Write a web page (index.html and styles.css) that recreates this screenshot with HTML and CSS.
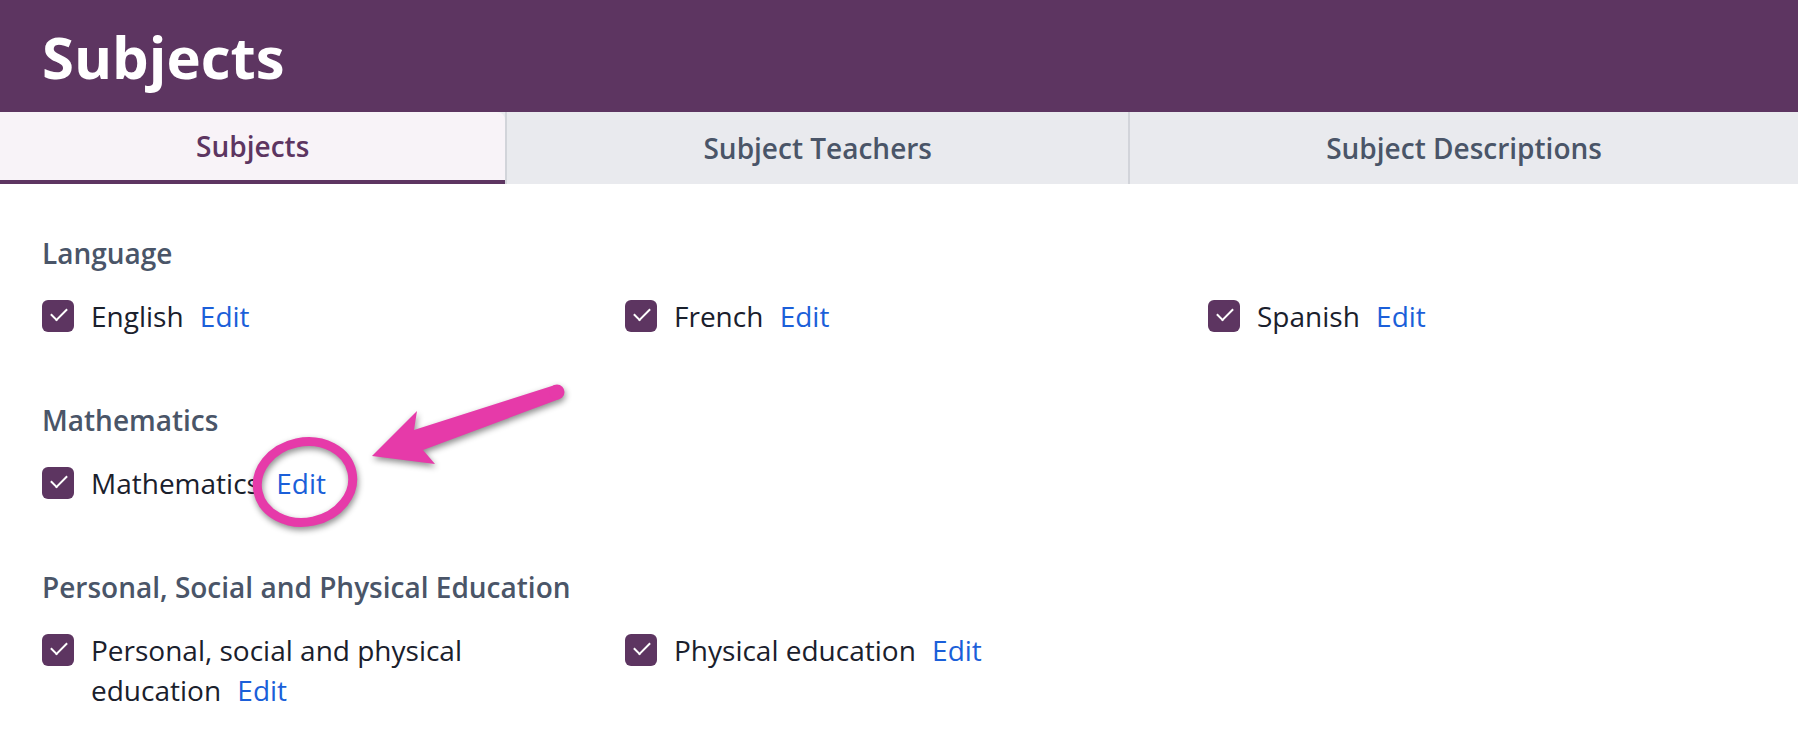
FILE: index.html
```html
<!DOCTYPE html>
<html lang="en">
<head>
<meta charset="UTF-8">
<title>Subjects</title>
<link rel="stylesheet" href="styles.css">
</head>
<body>
<header class="page-header">
  <h1>Subjects</h1>
</header>

<nav class="tabs">
  <a class="tab active" href="#">Subjects</a>
  <a class="tab" href="#">Subject Teachers</a>
  <a class="tab" href="#">Subject Descriptions</a>
</nav>

<main class="content">
  <section class="group">
    <h2>Language</h2>
    <div class="items">
      <div class="item"><span class="check"></span><span class="label">English <a href="#" class="edit">Edit</a></span></div>
      <div class="item"><span class="check"></span><span class="label">French <a href="#" class="edit">Edit</a></span></div>
      <div class="item"><span class="check"></span><span class="label">Spanish <a href="#" class="edit">Edit</a></span></div>
    </div>
  </section>

  <section class="group">
    <h2>Mathematics</h2>
    <div class="items">
      <div class="item"><span class="check"></span><span class="label">Mathematics <a href="#" class="edit">Edit</a></span></div>
    </div>
  </section>

  <section class="group">
    <h2>Personal, Social and Physical Education</h2>
    <div class="items">
      <div class="item"><span class="check"></span><span class="label">Personal, social and physical education <a href="#" class="edit">Edit</a></span></div>
      <div class="item"><span class="check"></span><span class="label">Physical education <a href="#" class="edit">Edit</a></span></div>
    </div>
  </section>
</main>

<!-- annotation drawn over the screenshot -->
<svg class="markup" width="1798" height="744" viewBox="0 0 1798 744">
  <ellipse cx="305" cy="482" rx="48" ry="40" transform="rotate(-12 305 482)" fill="none" stroke="#e63aa9" stroke-width="9"/>
  <polygon points="372,456 417,411 414,430 555,385 559.5,399 423,450 435,464" fill="#e63aa9"/>
  <circle cx="557" cy="392" r="7.5" fill="#e63aa9"/>
</svg>
</body>
</html>
```

FILE: styles.css
```css
body {
  margin: 0;
  font-family: "Open Sans", "Noto Sans", sans-serif;
  color: #1a202c;
  background: #fff;
  position: relative;
  height: 744px;
  overflow: hidden;
}

.page-header {
  background: #5d3561;
  height: 112px;
  padding: 0 42px;
  display: flex;
  align-items: center;
}

.page-header h1 {
  margin: 0;
  color: #fff;
  font-size: 58px;
  font-weight: 700;
}

.tabs {
  display: flex;
  background: #e9eaee;
}

.tab {
  flex: 1 1 auto;
  height: 72px;
  display: flex;
  align-items: center;
  justify-content: center;
  font-size: 28px;
  font-weight: 600;
  color: #4a5568;
  text-decoration: none;
  border-left: 2px solid #d2d4da;
  box-sizing: border-box;
}

.tab:first-child {
  border-left: none;
}

.tab.active {
  background: #f8f3f8;
  color: #5d3561;
  border-bottom: 4px solid #5d3561;
  border-top-right-radius: 8px;
}

.content {
  padding: 49px 42px 0;
  line-height: 40px;
  font-size: 28px;
}

.group {
  margin-bottom: 64px;
}

.group h2 {
  margin: 0 0 23px;
  font-size: 28px;
  font-weight: 600;
  color: #4a5568;
}

.items {
  display: grid;
  grid-template-columns: repeat(3, 503px);
  column-gap: 80px;
}

.item {
  display: flex;
  align-items: flex-start;
}

.check {
  flex: none;
  width: 32px;
  height: 32px;
  margin: 4px 17px 0 0;
  border-radius: 6px;
  background: #5d3561;
  position: relative;
}

/* the tick */
.check::after {
  content: "";
  position: absolute;
  left: 9px;
  top: 8px;
  width: 14px;
  height: 7px;
  border-left: 2px solid #fff;
  border-bottom: 2px solid #fff;
  transform: rotate(-45deg);
}

.edit {
  color: #1b5fd9;
  text-decoration: none;
  margin-left: 9px;
}

.markup {
  position: absolute;
  left: 0;
  top: 0;
  pointer-events: none;
  filter: drop-shadow(1px 3px 3px rgba(0, 0, 0, 0.45));
}
```
